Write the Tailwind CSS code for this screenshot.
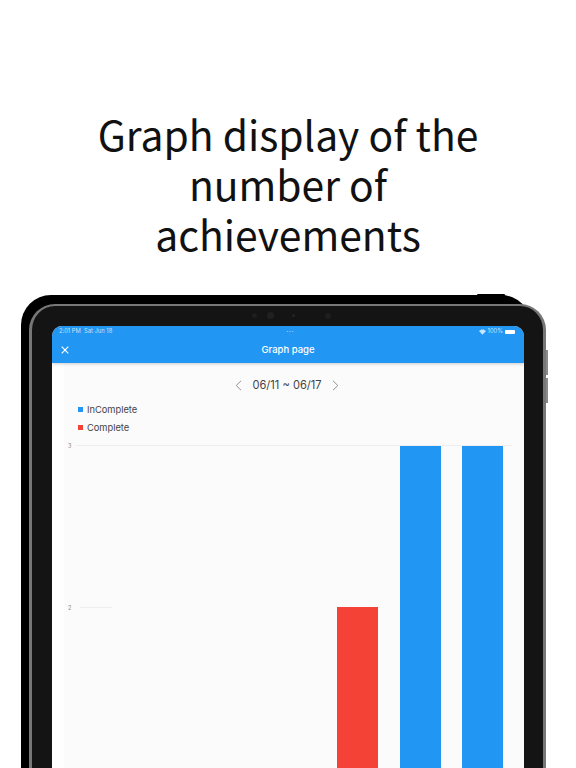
<!DOCTYPE html>
<html lang="en">
  <head>
    <meta charset="UTF-8" />
    <title>Graph page</title>
    <script src="https://cdn.jsdelivr.net/npm/@tailwindcss/browser@4"></script>
  </head>
  <body class="bg-white">
    <div class="h-[768px] w-[576px] overflow-hidden relative">
      <!-- Heading -->
      <h1 class="h-[295px] pt-[109px] text-center text-[40.8px] leading-[50px] text-[#111] px-[60px] font-['Noto_Sans_CJK_JP','Noto_Sans',sans-serif]">
        Graph display of the number of achievements
      </h1>

      <!-- Tablet -->
      <div class="relative ml-[21px] w-[510px] h-[473px] bg-black rounded-tl-[30px] rounded-tr-[30px] pl-[8px] pt-[9px]">
        <div class="absolute right-[26px] top-[-1px] w-[28px] h-[3px] bg-black rounded-t-[1px]"></div>
        <div class="absolute left-[525px] top-[55px] w-[2px] h-[25px] bg-[#8a8a8a]"></div>
        <div class="absolute left-[525px] top-[83px] w-[2px] h-[25px] bg-[#8a8a8a]"></div>

        <div class="relative w-[517px] h-[480px] bg-[#141414] border-t-[2px] border-x-[3px] border-x-[#77777a] border-t-[#77777a] rounded-t-[26px] pl-[20px] pt-[20px]">
          <!-- Cameras -->
          <div class="absolute top-[6px] left-[220px] flex items-center gap-[10px]">
            <span class="w-[5px] h-[5px] rounded-full bg-[#1e1e1e]"></span>
            <span class="w-[7px] h-[7px] rounded-full bg-[#202020]"></span>
            <span class="w-[3px] h-[3px] ml-[8px] rounded-full bg-[#242424]"></span>
            <span class="w-[6px] h-[6px] ml-[20px] rounded-full bg-[#1e1e1e]"></span>
          </div>

          <!-- Screen -->
          <div class="w-[472px] h-[460px] bg-[linear-gradient(to_right,#fefefe_12px,#fcfbfc_12px)] rounded-t-[10px] overflow-hidden font-['Inter',sans-serif]">
            <!-- App bar -->
            <div class="h-[37px] bg-[#2196f3] shadow-[0_1px_3px_rgba(0,0,0,0.2)] text-white relative">
              <div class="flex items-center justify-between h-[11px] pl-[7px] pr-[9px] text-[5.8px] text-white/75">
                <span>2:01 PM&nbsp;&nbsp;Sat Jun 18</span>
                <span class="flex gap-[1px] text-[3px] tracking-[1px] mr-[10px]">•••</span>
                <span class="flex items-center gap-[2px]">
                  <svg class="w-[7px] h-[6px]" viewBox="0 0 14 11" fill="currentColor"><path d="M7 11 0 3.5C4-.8 10-.8 14 3.5z" /></svg>
                  100%
                  <span class="w-[10px] h-[4px] bg-white rounded-[1px]"></span>
                </span>
              </div>
              <div class="flex items-center h-[26px] px-[9px] relative">
                <svg class="w-[8px] h-[8px]" viewBox="0 0 8 8" fill="none" stroke="white" stroke-width="1.2"><path d="M.7.7l6.6 6.6M7.3.7.7 7.3" /></svg>
                <span class="flex-1 text-center text-[9.5px] font-medium pr-[8px]">Graph page</span>
              </div>
            </div>

            <!-- Date picker -->
            <div class="flex items-center justify-center gap-[10px] h-[44px] pt-[1px] pr-[2px] text-[11.1px] text-[#444]">
              <svg class="w-[7px] h-[11px]" viewBox="0 0 7 11" fill="none" stroke="#8f8f8f" stroke-width="1"><path d="M6 .8 1.2 5.5 6 10.2" /></svg>
              <span>06/11 ~ 06/17</span>
              <svg class="w-[7px] h-[11px]" viewBox="0 0 7 11" fill="none" stroke="#8f8f8f" stroke-width="1"><path d="M1 .8 5.8 5.5 1 10.2" /></svg>
            </div>

            <!-- Legend -->
            <div class="flex flex-col gap-[5px] -mt-[4px] pl-[26px] h-[42px] text-[9.3px] leading-[13px] text-[#444]">
              <div class="flex items-center gap-[4px]"><span class="w-[5px] h-[5px] bg-[#2196f3]"></span>InComplete</div>
              <div class="flex items-center gap-[4px]"><span class="w-[5px] h-[5px] bg-[#f44336]"></span>Complete</div>
            </div>

            <!-- Chart -->
            <div class="relative h-[330px]">
              <div class="absolute left-[16px] top-[-2px] text-[5.5px] leading-[6px] text-[#888]">3</div>
              <div class="absolute left-[24px] right-[12px] top-0 h-px bg-[#eeeef0]"></div>
              <div class="absolute left-[16px] top-[160px] text-[5.5px] leading-[6px] text-[#888]">2</div>
              <div class="absolute left-[28px] w-[32px] top-[162px] h-px bg-[#eeeef0]"></div>
              <div class="flex items-end gap-[21.5px] h-full pl-[285px]">
                <div class="w-[41px] h-[168px] bg-[#f44336]"></div>
                <div class="w-[41px] h-[329px] bg-[#2196f3]"></div>
                <div class="w-[41px] h-[329px] bg-[#2196f3]"></div>
              </div>
            </div>
          </div>
        </div>
      </div>
    </div>
  </body>
</html>
